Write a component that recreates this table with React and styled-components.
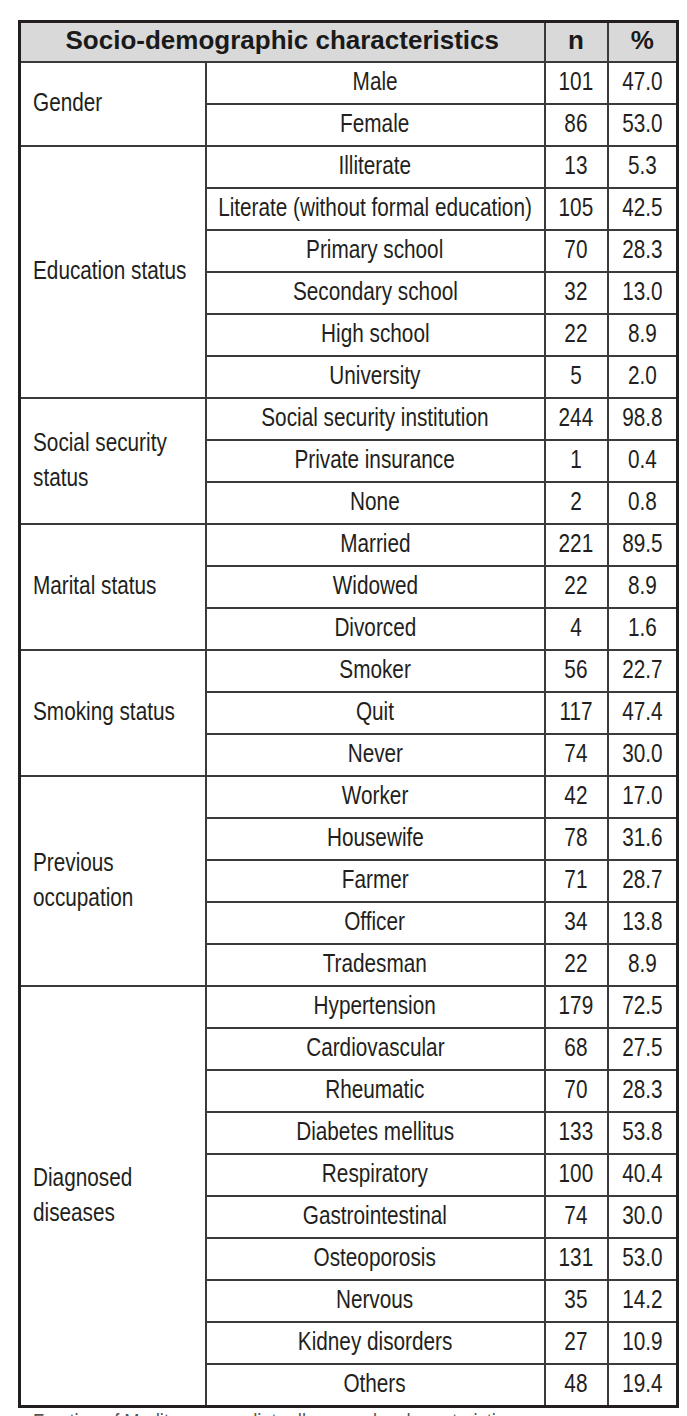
import styled, { createGlobalStyle } from "styled-components";

const GlobalStyle = createGlobalStyle`
    html, body {
        margin: 0;
        padding: 0;
        background: #ffffff;
    }
    body {
        width: 687px;
        height: 1416px;
        overflow: hidden;
    }
`;

const Page = styled.div`
    padding: 20px 11px 0 18px;
    font-family: "Liberation Sans", Arial, sans-serif;
    color: #231f20;
`;

const Table = styled.table`
    width: 658px;
    border-collapse: collapse;
    table-layout: fixed;
    border: 3px solid #231f20;
`;

const HeadCell = styled.th`
    height: 35px;
    padding: 0 0 3px;
    background: #d9d9d9;
    border: 2px solid #3a3a3a;
    font-size: 26px;
    font-weight: 700;
    text-align: center;
    color: #1a1a1a;
`;

const Cell = styled.td`
    height: 37px;
    padding: 0 0 3px ${(p) => (p.$left ? "12px" : "0")};
    border: 2px solid #3a3a3a;
    font-size: 25px;
    line-height: 35px;
    vertical-align: middle;
`;

const Centered = styled.div`
    display: flex;
    justify-content: center;
    white-space: nowrap;
`;

// condensed face: the reference uses a narrow grotesque
const Narrow = styled.span`
    display: inline-block;
    flex-shrink: 0;
    width: ${(p) => p.$width || "auto"};
    transform: scaleX(0.83);
    transform-origin: ${(p) => (p.$left ? "left" : "center")};
`;

const Caption = styled.p`
    margin: 3px 0 0 15px;
    font-size: 22px;
    line-height: 1;
    color: #555;
    white-space: nowrap;
`;

const groups = [
    {
        name: "Gender",
        rows: [
            ["Male", 101, "47.0"],
            ["Female", 86, "53.0"],
        ],
    },
    {
        name: "Education status",
        rows: [
            ["Illiterate", 13, "5.3"],
            ["Literate (without formal education)", 105, "42.5"],
            ["Primary school", 70, "28.3"],
            ["Secondary school", 32, "13.0"],
            ["High school", 22, "8.9"],
            ["University", 5, "2.0"],
        ],
    },
    {
        name: "Social security status",
        rows: [
            ["Social security institution", 244, "98.8"],
            ["Private insurance", 1, "0.4"],
            ["None", 2, "0.8"],
        ],
    },
    {
        name: "Marital status",
        rows: [
            ["Married", 221, "89.5"],
            ["Widowed", 22, "8.9"],
            ["Divorced", 4, "1.6"],
        ],
    },
    {
        name: "Smoking status",
        rows: [
            ["Smoker", 56, "22.7"],
            ["Quit", 117, "47.4"],
            ["Never", 74, "30.0"],
        ],
    },
    {
        name: "Previous occupation",
        rows: [
            ["Worker", 42, "17.0"],
            ["Housewife", 78, "31.6"],
            ["Farmer", 71, "28.7"],
            ["Officer", 34, "13.8"],
            ["Tradesman", 22, "8.9"],
        ],
    },
    {
        name: "Diagnosed diseases",
        rows: [
            ["Hypertension", 179, "72.5"],
            ["Cardiovascular", 68, "27.5"],
            ["Rheumatic", 70, "28.3"],
            ["Diabetes mellitus", 133, "53.8"],
            ["Respiratory", 100, "40.4"],
            ["Gastrointestinal", 74, "30.0"],
            ["Osteoporosis", 131, "53.0"],
            ["Nervous", 35, "14.2"],
            ["Kidney disorders", 27, "10.9"],
            ["Others", 48, "19.4"],
        ],
    },
];

function ValueCell({ children }) {
    return (
        <Cell>
            <Centered>
                <Narrow>{children}</Narrow>
            </Centered>
        </Cell>
    );
}

function App() {
    return (
        <Page>
            <GlobalStyle />
            <Table>
                <colgroup>
                    <col style={{ width: "186px" }} />
                    <col style={{ width: "339px" }} />
                    <col style={{ width: "63px" }} />
                    <col style={{ width: "70px" }} />
                </colgroup>
                <thead>
                    <tr>
                        <HeadCell colSpan={2}>Socio-demographic characteristics</HeadCell>
                        <HeadCell>n</HeadCell>
                        <HeadCell>%</HeadCell>
                    </tr>
                </thead>
                <tbody>
                    {groups.map((g) =>
                        g.rows.map((r, i) => (
                            <tr key={g.name + r[0]}>
                                {i === 0 && (
                                    <Cell $left rowSpan={g.rows.length}>
                                        <Narrow $left $width="200px">
                                            {g.name}
                                        </Narrow>
                                    </Cell>
                                )}
                                <ValueCell>{r[0]}</ValueCell>
                                <ValueCell>{r[1]}</ValueCell>
                                <ValueCell>{r[2]}</ValueCell>
                            </tr>
                        ))
                    )}
                </tbody>
            </Table>
            <Caption>
                <Narrow $left>Fraction of Mediterranean diet adherence by characteristics</Narrow>
            </Caption>
        </Page>
    );
}

export default App;
